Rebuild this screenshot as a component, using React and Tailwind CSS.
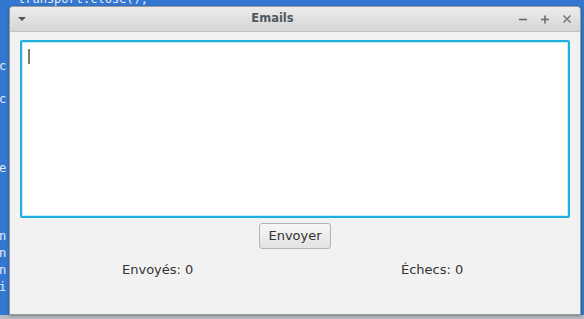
import React from "react";

const mono = { fontFamily: '"DejaVu Sans Mono", monospace' };

const App = () => {
  return (
    <div className="relative w-[584px] h-[319px] overflow-hidden bg-[#3477d0]" style={{ fontFamily: '"DejaVu Sans", sans-serif' }}>
      {/* editor text behind the window */}
      <div className="absolute left-[18px] top-[-8px] text-[12px] leading-[15px] text-[#e6ecf5]" style={mono}>
        transport.close();
      </div>
      <div className="absolute left-[-1px] top-[58px] text-[12px] leading-[17px] text-[#e6ecf5]" style={mono}>
        <div>c</div>
        <div className="mt-[16px]">c</div>
        <div className="mt-[52px]">e</div>
        <div className="mt-[51px]">n</div>
        <div>n</div>
        <div>n</div>
        <div>i</div>
      </div>

      <div className="absolute left-0 right-0 bottom-0 h-[4px] bg-[#b9bcc2]" />

      {/* window */}
      <div className="absolute left-[9px] top-[6px] w-[572px] h-[309px] flex flex-col rounded-t-[4px] border border-[#9a9a9a] bg-[#f2f2f2] shadow-[0_1px_3px_rgba(0,0,0,0.35)]">
        <div className="h-[25px] flex items-center px-[8px] rounded-t-[4px] bg-gradient-to-b from-[#ececec] to-[#d5d5d5] border-b border-[#c4c4c4]">
          <svg width="10" height="6" viewBox="0 0 10 6" className="ml-[-1px]">
            <path d="M1 1h8L5 5z" fill="#555" />
          </svg>
          <div className="flex-1 text-center text-[11.5px] font-bold text-[#505860]">Emails</div>
          <div className="flex items-center gap-[12px]">
            <svg width="10" height="10" viewBox="0 0 10 10">
              <path d="M1 5.5h8" stroke="#6a6a6a" strokeWidth="1.6" />
            </svg>
            <svg width="10" height="10" viewBox="0 0 10 10">
              <path d="M1 5.5h8M5 1.5v8" stroke="#6a6a6a" strokeWidth="1.6" />
            </svg>
            <svg width="10" height="10" viewBox="0 0 10 10">
              <path d="M1.5 1.5l7 7M8.5 1.5l-7 7" stroke="#7a7a7a" strokeWidth="1.6" />
            </svg>
          </div>
        </div>

        <div className="flex-1 flex flex-col px-[10px] pt-[8px]">
          <div className="h-[178px] bg-white border-[2px] border-[#1fb0e0] rounded-[2px] shadow-[inset_0_0_0_1px_#c5ecf8] p-[5px]">
            <div className="w-[2px] h-[15px] bg-[#777] ml-[1px] mt-[2px]" />
          </div>

          <div className="flex justify-center mt-[5px]">
            <button className="h-[26px] px-[8px] rounded-[3px] border border-[#b4b4b4] bg-gradient-to-b from-[#f7f7f7] to-[#e2e2e2] text-[13px] text-[#333]">
              Envoyer
            </button>
          </div>

          <div className="flex mt-[11px] text-[13px] text-[#333]">
            <div className="w-[280px] pl-[102px]">Envoyés: 0</div>
            <div className="pl-[101px]">Échecs: 0</div>
          </div>
        </div>
      </div>
    </div>
  );
};

export default App;
